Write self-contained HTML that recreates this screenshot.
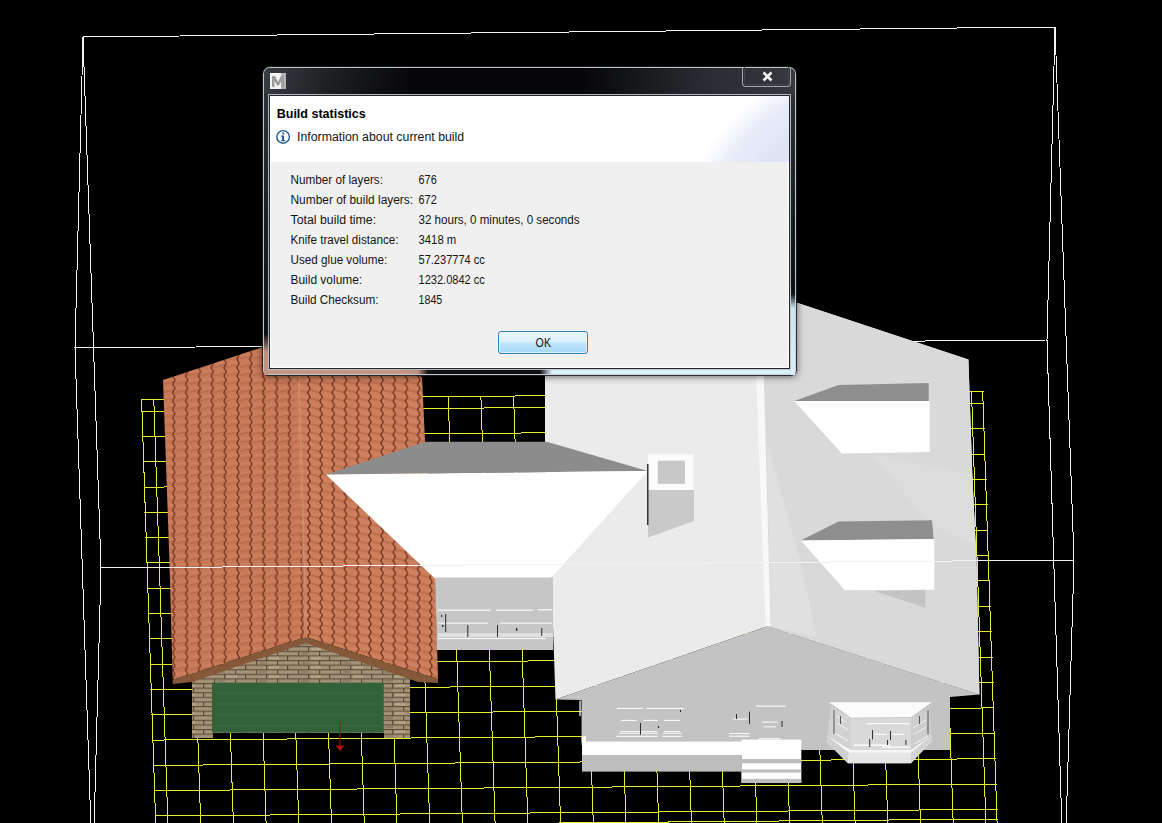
<!DOCTYPE html>
<html><head><meta charset="utf-8"><style>
html,body{margin:0;padding:0;width:1162px;height:823px;overflow:hidden;background:#000;font-family:"Liberation Sans",sans-serif;}
div{position:absolute;box-sizing:border-box}
</style></head><body>
<svg width="1162" height="823" viewBox="0 0 1162 823" style="position:absolute;left:0;top:0">
<defs>
<pattern id="tiles" patternUnits="userSpaceOnUse" width="12.85" height="8.4" x="186.6" y="0">
<rect width="12.85" height="8.4" fill="#c87a58"/>
<path d="M-1,6.5 L14,3.5" stroke="#9c5535" stroke-width="1.5" opacity="0.45"/><path d="M-1,3 L14,0" stroke="#e09272" stroke-width="1" opacity="0.35"/>
<path d="M0,0 C1.5,2.1 1.5,2.1 0,4.2 C-1.5,6.3 -1.5,6.3 0,8.4" stroke="#5a2210" stroke-width="1.1" fill="none"/>
<path d="M12.85,0 C14.35,2.1 14.35,2.1 12.85,4.2 C11.35,6.3 11.35,6.3 12.85,8.4" stroke="#5a2210" stroke-width="1.1" fill="none"/>
</pattern>
<pattern id="tiles2" patternUnits="userSpaceOnUse" width="12.2" height="8.4" x="308.9" y="0">
<rect width="12.2" height="8.4" fill="#cc7d5a"/>
<path d="M-1,3.5 L14,6.5" stroke="#9c5535" stroke-width="1.5" opacity="0.45"/><path d="M-1,0 L14,3" stroke="#e09272" stroke-width="1" opacity="0.35"/>
<path d="M0,0 C1.5,2.1 1.5,2.1 0,4.2 C-1.5,6.3 -1.5,6.3 0,8.4" stroke="#5a2210" stroke-width="1.1" fill="none"/>
<path d="M12.2,0 C13.7,2.1 13.7,2.1 12.2,4.2 C10.7,6.3 10.7,6.3 12.2,8.4" stroke="#5a2210" stroke-width="1.1" fill="none"/>
</pattern>
<pattern id="brick" patternUnits="userSpaceOnUse" width="42" height="9.2" y="637">
<rect width="42" height="9.2" fill="#a39278"/>
<rect x="0" y="0" width="42" height="1.1" fill="#5e4c38"/>
<rect x="0" y="4.6" width="42" height="1.1" fill="#5e4c38"/>
<rect x="14" y="0" width="1.2" height="4.6" fill="#5e4c38"/>
<rect x="35" y="0" width="1.2" height="4.6" fill="#5e4c38"/>
<rect x="4" y="4.6" width="1.2" height="4.6" fill="#5e4c38"/>
<rect x="25" y="4.6" width="1.2" height="4.6" fill="#5e4c38"/>
<rect x="17" y="1.5" width="10" height="2.5" fill="#b8a98e" opacity=".8"/>
<rect x="7" y="6" width="8" height="2.5" fill="#8a7860" opacity=".8"/>
</pattern>
</defs>
<rect width="1162" height="823" fill="#000"/>
<g stroke="#f4f4f4" stroke-width="1" fill="none" shape-rendering="crispEdges">
<path d="M83,37 L1055,27"/>
<path d="M83,37 L75,348 L91,830"/>
<path d="M83,37 L101,568 L94,830"/>
<path d="M1055,27 L1047,340 L1062,830"/>
<path d="M1055,27 L1074,560 L1066,830"/>
<path d="M75,348 L1047,340"/>
</g>
<path d="M141.6,399.7L155.9,830 M153.8,399.6L168.1,830 M186.5,399.3L200.9,830 M219.2,399.0L233.6,830 M251.9,398.7L266.3,830 M284.6,398.4L299.0,830 M317.3,398.0L331.7,830 M350.0,397.7L364.5,830 M382.8,397.4L397.2,830 M415.5,397.1L429.9,830 M448.2,396.8L462.6,830 M480.9,396.5L495.3,830 M513.6,396.2L528.1,830 M546.3,395.9L560.8,830 M579.0,395.6L593.5,830 M611.7,395.3L626.2,830 M644.4,395.0L658.9,830 M677.1,394.7L691.7,830 M709.9,394.4L724.4,830 M742.6,394.1L757.1,830 M775.3,393.8L789.8,830 M808.0,393.5L822.5,830 M840.7,393.2L855.3,830 M873.4,392.9L888.0,830 M906.1,392.6L920.7,830 M938.8,392.3L953.4,830 M971.5,392.0L986.1,830 M982.7,391.9L997.3,830 M140.8,399.6L983.9,391.5 M141.2,411.3L984.3,403.2 M142.0,436.6L985.2,428.6 M142.9,461.9L986.0,454.0 M143.7,487.2L986.8,479.4 M144.5,512.5L987.7,504.8 M145.4,537.8L988.5,530.1 M146.2,563.0L989.4,555.5 M147.1,588.3L990.2,580.9 M147.9,613.6L991.1,606.3 M148.8,638.9L991.9,631.7 M149.6,664.2L992.8,657.1 M150.4,689.5L993.6,682.5 M151.3,714.8L994.5,707.9 M152.1,740.1L995.3,733.3 M153.0,765.4L996.2,758.7 M153.8,790.6L997.0,784.0 M154.7,815.9L997.8,809.4 M155.0,826.7L998.2,819.0" stroke="#e4ee2e" stroke-width="1" fill="none" shape-rendering="crispEdges"/>
<polygon points="192,681 305.7,641 410,678 410,738 384,738 384,733 213,733 213,738 192,738" fill="url(#brick)"/>
<rect x="212" y="682.6" width="171.7" height="50" fill="#33623a"/>
<g stroke="#427346" stroke-width="1" opacity=".8"><path d="M216,693H380M216,704H380M216,715H380M216,726H380"/></g>
<path d="M339.8,721 V746" stroke="#a01212" stroke-width="1.1"/><polygon points="335.5,745.5 344.5,745.5 340,751" fill="#b01010"/>
<polygon points="163,380 296,336 305.7,637 172.7,680 169.4,560" fill="url(#tiles)"/>
<polygon points="296,336 422,377 425,441 435.3,579 438,679 305.7,637" fill="url(#tiles2)"/>
<path d="M297,336 L305.7,637" stroke="#de9674" stroke-width="3" opacity=".55"/>
<polygon points="172.7,680 305.7,637 438,679 438,683 418,682 305.7,643 192,682 172.7,684" fill="#86583a"/>
<polygon points="545,200 797,302.7 968.4,359.5 972.5,480 976.5,560 979.4,694.4 767.6,626.3 555.5,699.6 551.3,577 545,441.6" fill="#ebebeb"/>
<polygon points="759,200 797,302.7 968.4,359.5 972.5,480 976.5,560 979.4,694.4 767.6,626.3 770.5,626.3" fill="#d9d9d9"/>
<polygon points="749.5,200 759,200 770.5,626.5 765.6,626.5" fill="#f8f8f8"/>
<polygon points="766.5,440 771,626.3 817,638 800,560" fill="#e0e0e0"/>
<polygon points="871.5,453.8 972.3,474 975.5,545 930,525" fill="#dcdcdc" opacity=".8"/>
<polygon points="555.5,699.6 767.6,626.3 979.4,694.4 950,697 950,750 801,750 801,745 581.6,745 581.6,700" fill="#c3c3c3"/>
<rect x="579.4" y="700.6" width="1.3" height="15.4" fill="#f4f4f4"/><rect x="581.6" y="736" width="4.4" height="6" fill="#fafafa"/>
<rect x="582" y="741.6" width="219" height="13.4" fill="#ffffff"/>
<rect x="582" y="755" width="159.4" height="16.6" fill="#bdbdbd"/>
<rect x="741.4" y="739.6" width="59.9" height="43.4" fill="#ffffff"/>
<g fill="#bdbdbd"><rect x="741.4" y="759" width="59.9" height="4.3"/><rect x="741.4" y="769.5" width="59.9" height="3.1"/><rect x="741.4" y="778.8" width="59.9" height="4.2"/></g>
<g fill="#fafafa"><rect x="617" y="707.8" width="26" height="1.2"/><rect x="646.5" y="707.8" width="38" height="1.2"/><rect x="621" y="719.9" width="15.6" height="1.1"/><rect x="643" y="719.9" width="14.7" height="1.1"/><rect x="664" y="719.9" width="16" height="1.1"/><rect x="620" y="731.1" width="37" height="1"/><rect x="664" y="731.1" width="16" height="1"/><rect x="619" y="732.8" width="39" height="1"/><rect x="663" y="732.8" width="19" height="1"/><rect x="616.5" y="735.8" width="41" height="1.1"/><rect x="662" y="735.8" width="20" height="1.1"/>
<rect x="756" y="705.6" width="30" height="1.1"/><rect x="733" y="718.5" width="14.6" height="1.1"/><rect x="762" y="721.5" width="15.6" height="1.1"/><rect x="764" y="726.3" width="12" height="1"/><rect x="729" y="733" width="20.7" height="1"/><rect x="729" y="735.6" width="21" height="1.2"/><rect x="759" y="738.2" width="21.7" height="1.2"/></g>
<g fill="#2a2a2a"><rect x="640" y="723" width="1" height="11.6"/><rect x="736" y="714" width="1" height="5"/><rect x="749" y="711.7" width="1" height="12.3"/><rect x="781.5" y="721" width="1" height="6"/><rect x="680" y="710" width="1" height="2"/><rect x="658" y="726" width="1" height="2"/></g>
<polygon points="831.4,706.4 851,718 851,751.3 827.2,736.3" fill="#d2d2d2"/>
<polygon points="910.9,717.2 929.5,707.4 931.5,735.3 910.9,751.3" fill="#cdcdcd"/>
<rect x="851" y="718" width="60" height="33.3" fill="#d9d9d9"/>
<polygon points="828.3,702.2 932.6,702.2 910.9,718.2 851,718.2" fill="#fbfbfb"/>
<path d="M828.3,702.2 L851,718.2 L910.9,717.6 L932.6,702.2" stroke="#c4c4c4" stroke-width="1" fill="none"/>
<polygon points="827.2,736.3 851,750 910.9,750 932,735.3 932,741 910.9,763.2 847.9,763.2 827.2,742.5" fill="#f6f6f6"/>
<polygon points="827.2,736.3 848.9,752.8 847.9,763.2 827.2,742.5" fill="#cfcfcf"/>
<polygon points="932,735.3 910.9,752.8 910.9,763.2 932,741" fill="#d4d4d4"/>
<rect x="848.9" y="752.8" width="62" height="10.4" fill="#e6e6e6"/>
<g fill="#fafafa"><rect x="866.5" y="723" width="42.3" height="1.2"/><rect x="874" y="733.8" width="12.5" height="1.2"/><rect x="892" y="733.8" width="12.5" height="1.2"/><rect x="854" y="744.4" width="36" height="1.6"/><rect x="882" y="746.5" width="28" height="1.4"/></g>
<g fill="#333"><rect x="872" y="730" width="1" height="9.4"/><rect x="890" y="731" width="1" height="9"/><rect x="869.2" y="739" width="1" height="8"/><rect x="887" y="740" width="1" height="5"/><rect x="905.4" y="740" width="1" height="5"/></g>
<g stroke="#f4f4f4" stroke-width="1" fill="none"><path d="M836,716 L846,722 M837,723 L848,730 M835,733 L848,741"/><path d="M913,728 L926,720 M913,735 L926,727 M914,744 L928,736"/></g>
<g fill="#555"><rect x="833.5" y="710" width="1" height="24"/><rect x="927.5" y="710" width="1" height="24"/><rect x="840" y="716" width="1" height="8"/><rect x="919" y="716" width="1" height="8"/></g>
<polygon points="838.5,385 928.7,383 928.7,401 794.3,401" fill="#8e8e8e"/>
<polygon points="794.3,401 929.7,401 929.7,452 841.8,453.6" fill="#ffffff"/>
<polygon points="838.5,521.5 932,520.2 933.6,538.9 800.8,540.5" fill="#8e8e8e"/>
<polygon points="800.8,540.5 934.3,539 934.3,589.7 845,590.3" fill="#ffffff"/>
<polygon points="874.6,591.3 925.4,589.7 925.4,607.7" fill="#c4c4c4"/>
<polygon points="425.3,441.7 546.8,441.7 647.7,471 325.9,474.5" fill="#8c8c8c"/>
<polygon points="325.9,474.5 647.7,471 551,578 435.6,579.2" fill="#ffffff"/>
<polygon points="435,577.5 553,577.5 553,649.9 437,649.9" fill="#c6c6c6"/>
<g fill="#fafafa"><rect x="437.8" y="609.6" width="52.6" height="1.2"/><rect x="496" y="609.6" width="37" height="1.2"/><rect x="537.4" y="609.2" width="15" height="1.2"/><rect x="437.8" y="622.6" width="50" height="1.1"/><rect x="500" y="622.6" width="52" height="1.1"/><rect x="437.8" y="633.6" width="115" height="1"/><rect x="437.8" y="635.6" width="115" height="1"/><rect x="437.8" y="638" width="108" height="1.1"/></g>
<g fill="#2a2a2a"><rect x="445.2" y="614" width="1" height="18"/><rect x="467.3" y="625" width="1" height="12"/><rect x="497" y="625" width="1" height="12"/><rect x="541.2" y="628" width="1" height="8"/><rect x="441" y="615" width="1.2" height="2"/><rect x="442" y="625" width="1.5" height="2"/><rect x="516" y="628" width="1.3" height="3"/></g>
<polygon points="648,490 694,490 694,521 648,537.4" fill="#c9c9c9"/>
<rect x="648" y="454.3" width="45.5" height="35.7" fill="#fbfbfb"/>
<rect x="657.8" y="460.7" width="27.2" height="23.1" fill="#c8c8c8"/>
<rect x="647" y="464" width="1.5" height="61" fill="#333"/>
<path d="M101,568 L1074,560" stroke="#f2f2f2" stroke-width="1" fill="none" shape-rendering="crispEdges"/>
</svg>
<div style="left:262px;top:66px;width:535px;height:310px;border:1px solid rgba(25,28,32,.9);border-radius:8px 8px 6px 6px;box-shadow:0 1px 7px rgba(0,0,0,.55)"></div>
<div style="left:263px;top:67px;width:533px;height:308px;border:1px solid rgba(200,206,212,.95);border-radius:7px 7px 5px 5px;background:rgba(170,215,240,.25)"></div>
<div style="left:264px;top:68px;width:531px;height:26px;border-radius:6px 6px 0 0;background:linear-gradient(100deg,rgba(58,60,65,.92) 0%,rgba(30,31,35,.95) 12%,rgba(5,5,7,.97) 28%,rgba(5,5,7,.97) 60%,rgba(40,42,47,.95) 82%,rgba(55,57,62,.92) 100%)"></div>
<div style="left:264px;top:94px;width:4px;height:281px;background:linear-gradient(rgba(46,48,53,.96) 0,rgba(28,30,33,.96) 120px,rgba(12,13,15,.95) 240px,rgba(190,145,128,.95) 258px,rgba(196,150,132,.95) 100%)"></div>
<div style="left:791px;top:94px;width:4px;height:281px;background:linear-gradient(rgba(46,48,53,.96) 0,rgba(28,30,33,.96) 100px,rgba(12,13,15,.96) 200px,rgba(205,228,242,.97) 214px,rgba(218,240,250,.97) 100%)"></div>
<div style="left:268px;top:370px;width:527px;height:4px;background:linear-gradient(90deg,rgba(196,150,132,.95) 0,rgba(196,150,132,.95) 150px,rgba(14,15,17,.95) 160px,rgba(14,15,17,.95) 272px,rgba(218,240,250,.97) 284px,rgba(218,240,250,.97) 100%)"></div>
<svg style="position:absolute;left:270px;top:73px" width="16" height="16" viewBox="0 0 16 16"><rect width="16" height="16" fill="#f2f2f2"/><rect x="11" y="0" width="5" height="16" fill="#b4b4b4"/><path d="M2,14 V3 H5 L8,9 L11,3 H14 V14 H11.5 V7.5 L9,12.5 H7 L4.5,7.5 V14Z" fill="#9b9b9b"/></svg>
<div style="left:742px;top:67px;width:49px;height:20px;border:1px solid #a4a6aa;border-top:none;border-radius:0 0 4px 4px"></div>
<div style="left:744px;top:67px;width:45px;height:18px;border:1px solid #44464b;border-top:none;border-radius:0 0 3px 3px"></div>
<div style="left:268px;top:94px;width:523px;height:276px;border:1px solid rgba(190,196,202,.9)"></div>
<div style="left:269px;top:95px;width:521px;height:274px;border:1px solid #23262b;background:#f0f0f0;overflow:hidden;box-shadow:inset 1px 1px 0 #fff,inset -1px -1px 0 #fff">
 <div style="left:0;top:0;width:519px;height:66px;background:#fff"></div>
 <div style="left:0;top:0;width:519px;height:66px;background:radial-gradient(circle 200px at 600px 154px,#dce2f5 0,#e0e5f6 140px,#e9ecf9 168px,#f7f8fd 180px,rgba(255,255,255,0) 192px)"></div>
 <div style="left:228px;top:235px;width:90px;height:23px;border:1px solid #3c7fb1;border-radius:3px;background:linear-gradient(#eaf6fd 0%,#d9f0fc 48%,#bee6fd 52%,#a7d9f5 100%);box-shadow:inset 0 0 0 1px rgba(255,255,255,.55)"></div>
</div>
<svg width="1162" height="823" style="position:absolute;left:0;top:0" font-family="Liberation Sans"><text x="276.7" y="118" font-size="13.5" font-weight="bold" fill="#000" textLength="89.1" lengthAdjust="spacingAndGlyphs">Build statistics</text><text x="297" y="140.5" font-size="12" font-weight="normal" fill="#141414" textLength="167.2" lengthAdjust="spacingAndGlyphs">Information about current build</text><text x="290.5" y="183.6" font-size="12" font-weight="normal" fill="#141414" textLength="92.4" lengthAdjust="spacingAndGlyphs">Number of layers:</text><text x="290.5" y="203.6" font-size="12" font-weight="normal" fill="#141414" textLength="122.6" lengthAdjust="spacingAndGlyphs">Number of build layers:</text><text x="290.5" y="223.6" font-size="12" font-weight="normal" fill="#141414" textLength="85.6" lengthAdjust="spacingAndGlyphs">Total build time:</text><text x="290.5" y="243.6" font-size="12" font-weight="normal" fill="#141414" textLength="107.9" lengthAdjust="spacingAndGlyphs">Knife travel distance:</text><text x="290.5" y="263.6" font-size="12" font-weight="normal" fill="#141414" textLength="96.8" lengthAdjust="spacingAndGlyphs">Used glue volume:</text><text x="290.5" y="283.6" font-size="12" font-weight="normal" fill="#141414" textLength="71.7" lengthAdjust="spacingAndGlyphs">Build volume:</text><text x="290.5" y="303.6" font-size="12" font-weight="normal" fill="#141414" textLength="88.0" lengthAdjust="spacingAndGlyphs">Build Checksum:</text><text x="418.5" y="183.6" font-size="12" font-weight="normal" fill="#141414" textLength="18.2" lengthAdjust="spacingAndGlyphs">676</text><text x="418.5" y="203.6" font-size="12" font-weight="normal" fill="#141414" textLength="18.2" lengthAdjust="spacingAndGlyphs">672</text><text x="418.5" y="223.6" font-size="12" font-weight="normal" fill="#141414" textLength="161.0" lengthAdjust="spacingAndGlyphs">32 hours, 0 minutes, 0 seconds</text><text x="418.5" y="243.6" font-size="12" font-weight="normal" fill="#141414" textLength="37.8" lengthAdjust="spacingAndGlyphs">3418 m</text><text x="418.5" y="263.6" font-size="12" font-weight="normal" fill="#141414" textLength="66.4" lengthAdjust="spacingAndGlyphs">57.237774 cc</text><text x="418.5" y="283.6" font-size="12" font-weight="normal" fill="#141414" textLength="66.4" lengthAdjust="spacingAndGlyphs">1232.0842 cc</text><text x="418.5" y="303.6" font-size="12" font-weight="normal" fill="#141414" textLength="23.8" lengthAdjust="spacingAndGlyphs">1845</text><text x="535.6" y="346.8" font-size="12" font-weight="normal" fill="#141414" textLength="15.4" lengthAdjust="spacingAndGlyphs">OK</text><g><circle cx="283.1" cy="136.9" r="6.3" fill="none" stroke="#1d5c96" stroke-width="1.4"/><rect x="282.2" y="132.6" width="1.9" height="1.8" fill="#1d5c96"/><path d="M280.9,135.4 H284.1 V140.2 H285.4 V141.3 H280.9 V140.2 H282.1 V136.5 H280.9Z" fill="#1d5c96"/></g><path d="M763.5,72.5 L771.5,80.5 M771.5,72.5 L763.5,80.5" stroke="#f2f2f2" stroke-width="2.6"/></svg>
</body></html>
